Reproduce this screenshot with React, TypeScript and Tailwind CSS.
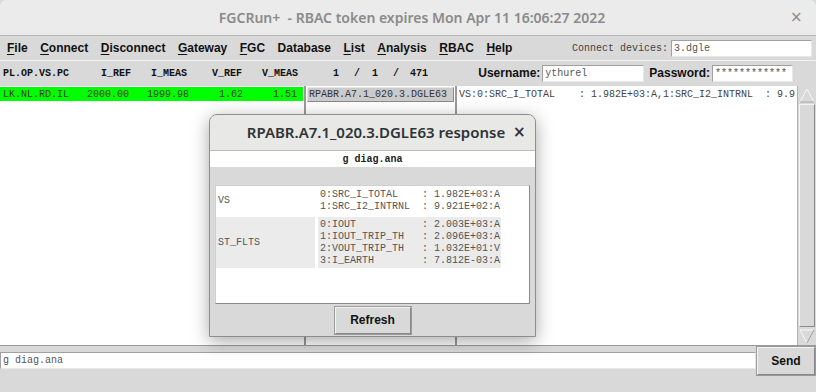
import React from "react";

const mono = "font-['Liberation_Mono',monospace] text-[10px]";
const sans = "font-['Liberation_Sans',Arial,sans-serif]";

const menus: [string, string][] = [
  ["F", "ile"],
  ["C", "onnect"],
  ["D", "isconnect"],
  ["G", "ateway"],
  ["F", "GC"],
  ["", "Database"],
  ["L", "ist"],
  ["A", "nalysis"],
  ["R", "BAC"],
  ["H", "elp"],
];

const rows = [
  {
    label: "VS",
    lines: ["0:SRC_I_TOTAL    : 1.982E+03:A", "1:SRC_I2_INTRNL  : 9.921E+02:A"],
    shaded: false,
  },
  {
    label: "ST_FLTS",
    lines: [
      "0:IOUT           : 2.003E+03:A",
      "1:IOUT_TRIP_TH   : 2.096E+03:A",
      "2:VOUT_TRIP_TH   : 1.032E+01:V",
      "3:I_EARTH        : 7.812E-03:A",
    ],
    shaded: true,
  },
];

const Field = ({ value, className }: { value: string; className: string }) => (
  <div
    className={`bg-white border border-[#a0a0a0] border-b-[#e8e8e8] border-r-[#e8e8e8] h-[17px] px-[2px] flex items-center text-[#555] whitespace-pre overflow-hidden ${mono} ${className}`}
  >
    {value}
  </div>
);

const ResponseDialog = () => (
  <div className="absolute left-[209px] top-[114px] w-[327px] h-[223px] rounded-t-[8px] border border-[#8e8e8e] bg-[#d9d9d9] shadow-[0_4px_18px_rgba(0,0,0,0.35)] flex flex-col overflow-hidden">
    <div className="h-[36px] shrink-0 bg-[#e8e8e7] border-b border-[#bfbcb7] flex items-center">
      <span className="flex-1 text-center pl-[31px] font-['Noto_Sans',sans-serif] font-semibold text-[15px] text-[#2e3436] whitespace-nowrap">
        RPABR.A7.1_020.3.DGLE63 response
      </span>
      <span className="w-[24px] pl-[2px] text-[15px] font-bold text-[#2e3436] font-['DejaVu_Sans',sans-serif]">
        ×
      </span>
    </div>
    <div className={`h-[16px] shrink-0 bg-white flex items-center justify-center font-bold text-[#222] ${mono}`}>
      g diag.ana
    </div>
    <div className="h-[18px] shrink-0" />
    <div className="mx-[5px] h-[119px] bg-white border border-[#8a8a8a] border-l-[#d0d0d0] border-t-[#d0d0d0] flex flex-col gap-[3px] pt-[1px]">
      {rows.map((r) => (
        <div key={r.label} className="flex gap-[3px] text-[#555]">
          <div
            className={`w-[99px] flex items-center pl-[2px] ${mono} ${r.shaded ? "bg-[#ebebeb]" : ""}`}
          >
            {r.label}
          </div>
          <div
            className={`w-[183px] py-[2px] pl-[2px] leading-[11.7px] whitespace-pre ${mono} ${r.shaded ? "bg-[#ebebeb]" : ""}`}
          >
            {r.lines.map((l) => (
              <div key={l}>{l}</div>
            ))}
          </div>
        </div>
      ))}
    </div>
    <div className="flex-1 flex items-center justify-center">
      <button
        className={`w-[76px] h-[27px] border border-[#888] border-t-[#f4f4f4] border-l-[#f4f4f4] bg-[#d9d9d9] outline outline-1 outline-[#9a9a9a] font-bold text-[12px] text-[#111] ${sans}`}
      >
        Refresh
      </button>
    </div>
  </div>
);

export default function App() {
  return (
    <div className="relative w-[816px] h-[392px] overflow-hidden bg-[#d9d9d9] flex flex-col">
      {/* window title */}
      <div className="h-[36px] shrink-0 bg-[#ebebeb] border-b border-[#b8b8b8] flex items-center rounded-t-[6px]">
        <span className="flex-1 text-center pl-[34px] font-['Noto_Sans',sans-serif] font-semibold text-[14px] text-[#8a8a8a] whitespace-pre">
          FGCRun+  - RBAC token expires Mon Apr 11 16:06:27 2022
        </span>
        <span className="w-[26px] text-[15px] text-[#8a8a8a] font-['DejaVu_Sans',sans-serif]">
          ×
        </span>
      </div>

      {/* menu bar */}
      <div className="h-[25px] shrink-0 flex items-center border-b border-[#f2f2f2] pl-[7px] pr-[4px]">
        <div className={`flex gap-[12.5px] font-bold text-[12px] text-[#111] ${sans}`}>
          {menus.map(([u, rest]) => (
            <span key={u + rest}>
              <span className="underline underline-offset-[2px]">{u}</span>
              {rest}
            </span>
          ))}
        </div>
        <div className="flex-1" />
        <span className={`text-[#444] mr-[3px] ${mono}`}>Connect devices:</span>
        <Field value="3.dgle" className="w-[141px]" />
      </div>

      {/* column header row */}
      <div className={`h-[24px] shrink-0 flex items-center pl-[3px] pr-[23px] text-[#111] font-bold ${mono}`}>
        <span className="w-[98px]">PL.OP.VS.PC</span>
        <span className="w-[50px]">I_REF</span>
        <span className="w-[61px]">I_MEAS</span>
        <span className="w-[50px]">V_REF</span>
        <span className="w-[71px]">V_MEAS</span>
        <span className="w-[21px]">1</span>
        <span className="w-[18px]">/</span>
        <span className="w-[21px]">1</span>
        <span className="w-[17px]">/</span>
        <span>471</span>
        <div className="flex-1" />
        <span className={`font-bold text-[12px] mr-[2px] ${sans}`}>Username:</span>
        <Field value="ythurel" className="w-[102px] font-normal" />
        <span className={`font-bold text-[12px] ml-[5px] mr-[2px] ${sans}`}>Password:</span>
        <Field value="************" className="w-[81px] font-normal" />
      </div>

      <div className="h-[1px] shrink-0" />

      {/* main panels */}
      <div className="h-[260px] shrink-0 flex border-b border-[#9a9a9a]">
        <div className="w-[304px] bg-white pt-[1px]">
          <div className={`h-[14px] w-[303px] bg-[#00ff00] flex items-center pl-[3px] text-[#3a3a3a] whitespace-pre ${mono}`}>
            LK.NL.RD.IL   2000.00   1999.98     1.62     1.51
          </div>
        </div>
        <div className="w-[2px] bg-[#9a9a9a]" />
        <div className="w-[149px] bg-white pt-[1px] pl-[1px]">
          <div className={`h-[15px] w-[147px] bg-[#cbcbcb] border border-[#8a8a8a] border-t-[#e6e6e6] border-l-[#e6e6e6] flex items-center pl-[1px] text-[#333] ${mono}`}>
            RPABR.A7.1_020.3.DGLE63
          </div>
        </div>
        <div className="w-[2px] bg-[#9a9a9a]" />
        <div className={`flex-1 bg-white pl-[2px] pt-[1px] text-[#444] whitespace-pre overflow-hidden ${mono}`}>
          VS:0:SRC_I_TOTAL    : 1.982E+03:A,1:SRC_I2_INTRNL  : 9.9
        </div>
        {/* scrollbar */}
        <div className="w-[19px] bg-[#d9d9d9] border-l border-[#b0b0b0] flex flex-col p-[1px]">
          <div className="h-[16px] flex items-center justify-center">
            <svg width="16" height="15" viewBox="0 0 16 15">
              <path d="M1 14 L8 1 L15 14 Z" fill="#d9d9d9" stroke="#f8f8f8" strokeWidth="1" />
              <path d="M15 14 L1 14" stroke="#9a9a9a" />
            </svg>
          </div>
          <div className="flex-1 border border-[#8a8a8a] border-t-[#f4f4f4] border-l-[#f4f4f4] my-[1px] bg-[#d9d9d9]" />
          <div className="h-[16px] flex items-center justify-center">
            <svg width="16" height="15" viewBox="0 0 16 15">
              <path d="M1 1 L8 14 L15 1 Z" fill="#d9d9d9" stroke="#f8f8f8" strokeWidth="1" />
              <path d="M8 14 L15 1" stroke="#9a9a9a" />
            </svg>
          </div>
        </div>
      </div>

      {/* command line */}
      <div className="flex-1 flex items-start">
        <Field value="g diag.ana" className="w-[756px] mt-[6px]" />
        <button
          className={`ml-[1px] mt-[1px] w-[58px] h-[28px] border border-[#888] border-t-[#f4f4f4] border-l-[#f4f4f4] outline outline-1 outline-[#9a9a9a] bg-[#d9d9d9] font-bold text-[12px] text-[#111] ${sans}`}
        >
          Send
        </button>
      </div>

      <ResponseDialog />
    </div>
  );
}
